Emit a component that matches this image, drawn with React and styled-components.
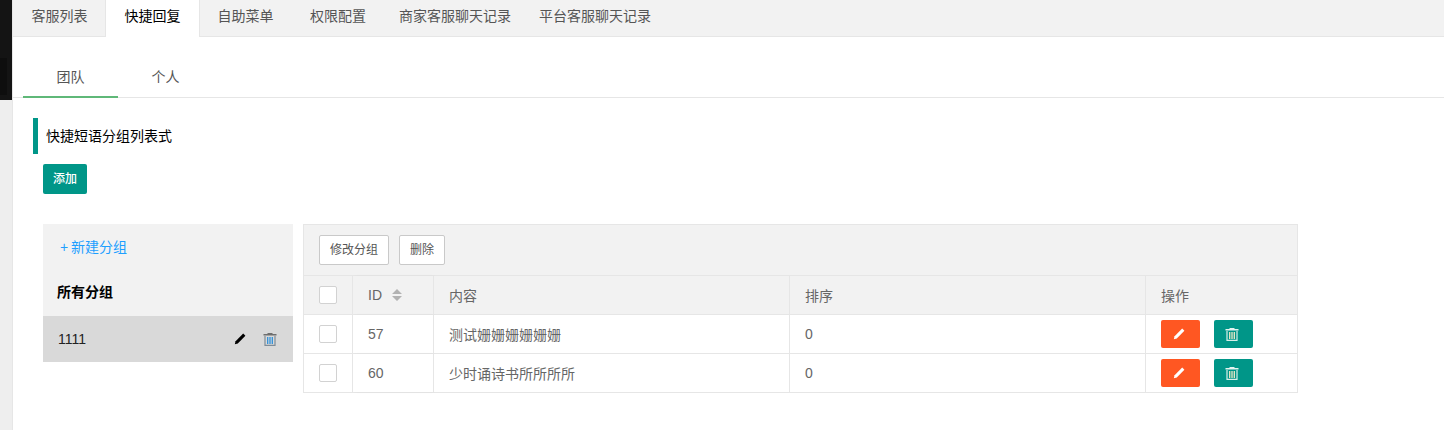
import React from 'react'
import styled, { createGlobalStyle } from 'styled-components'

const GlobalStyle = createGlobalStyle`
html, body {
  margin: 0;
  padding: 0;
  height: 430px;
  overflow: hidden;
  background: #fff;
  font-family: "Liberation Sans", "Noto Sans CJK SC", sans-serif;
  font-size: 14px;
  color: #666;
}
* { box-sizing: border-box; }
`

function Pencil({ color }) {
  return (
    <svg width="12" height="12" viewBox="0 0 12 12">
      <path d="M9.2 0.6 L11.4 2.8 L3.8 10.4 L0.8 11.2 L1.6 8.2 Z" fill={color} />
    </svg>
  )
}

function Trash({ lid, outline, lines }) {
  return (
    <svg width="14" height="13" viewBox="0 0 14 13">
      <path d="M4.5 0 H9.5 V1 H13.5 V2.6 H0.5 V1 H4.5 Z" fill={lid} />
      <path d="M2 3 V12.4 H12 V3" fill="none" stroke={outline} strokeWidth="1.2" />
      <path d="M4.7 4 V11 M7 4 V11 M9.3 4 V11" stroke={lines} strokeWidth="1.3" fill="none" />
    </svg>
  )
}

const topTabs = [
  { label: '客服列表', pad: 18.5 },
  { label: '快捷回复', pad: 18.5, active: true },
  { label: '自助菜单', pad: 18.5 },
  { label: '权限配置', pad: 18 },
  { label: '商家客服聊天记录', pad: 15 },
  { label: '平台客服聊天记录', pad: 13 },
]

const rows = [
  { id: 57, text: '测试姗姗姗姗姗姗', sort: 0 },
  { id: 60, text: '少时诵诗书所所所所', sort: 0 },
]

export default function App() {
  return (
    <Page>
      <GlobalStyle />
      <SideStrip>
        <DarkBlock>
          <DarkInset />
        </DarkBlock>
      </SideStrip>
      <Main>
        <TopTabs>
          {topTabs.map((t) => (
            <TopTab key={t.label} $pad={t.pad} $active={t.active}>{t.label}</TopTab>
          ))}
        </TopTabs>
        <SubTabs>
          <SubTab $active>团队</SubTab>
          <SubTab>个人</SubTab>
        </SubTabs>
        <Quote>快捷短语分组列表式</Quote>
        <AddButton>添加</AddButton>
        <Content>
          <GroupPanel>
            <NewGroup>+ 新建分组</NewGroup>
            <GroupTitle>所有分组</GroupTitle>
            <GroupRow>
              <span>1111</span>
              <GroupIcons>
                <Pencil color="#000" />
                <Trash lid="#6e6e6e" outline="#7f8c97" lines="#2f8fd8" />
              </GroupIcons>
            </GroupRow>
          </GroupPanel>
          <TableBox>
            <Toolbar>
              <PlainButton>修改分组</PlainButton>
              <PlainButton>删除</PlainButton>
            </Toolbar>
            <Table>
              <colgroup>
                <col style={{ width: 48 }} />
                <col style={{ width: 81 }} />
                <col style={{ width: 356 }} />
                <col style={{ width: 356 }} />
                <col />
              </colgroup>
              <thead>
                <tr>
                  <Th><Check /></Th>
                  <Th $shadow>
                    <IdHead>
                      ID
                      <SortIcon viewBox="0 0 10 12" width="10" height="12">
                        <path d="M5 0 L10 5 H0 Z M0 7 H10 L5 12 Z" fill="#b2b2b2" />
                      </SortIcon>
                    </IdHead>
                  </Th>
                  <Th>内容</Th>
                  <Th>排序</Th>
                  <Th>操作</Th>
                </tr>
              </thead>
              <tbody>
                {rows.map((r) => (
                  <tr key={r.id}>
                    <Td><Check /></Td>
                    <Td $shadow>{r.id}</Td>
                    <Td>{r.text}</Td>
                    <Td>{r.sort}</Td>
                    <Td>
                      <Actions>
                        <ActionButton $bg="#ff5722"><Pencil color="#fff" /></ActionButton>
                        <ActionButton $bg="#009688">
                          <Trash lid="#e4f3ef" outline="#d8efe9" lines="#efe9c8" />
                        </ActionButton>
                      </Actions>
                    </Td>
                  </tr>
                ))}
              </tbody>
            </Table>
          </TableBox>
        </Content>
      </Main>
    </Page>
  )
}

const Page = styled.div`
  display: flex;
  width: 1444px;
  height: 430px;
  overflow: hidden;
`

const SideStrip = styled.div`
  width: 13px;
  flex: none;
  background: #eeeeee;
  border-right: 1px solid #e6e6e6;
`

const DarkBlock = styled.div`
  width: 12px;
  height: 100px;
  padding-top: 58px;
  background: #141414;
`

const DarkInset = styled.div`
  width: 7px;
  height: 37px;
  background: #0e0e0e;
`

const Main = styled.div`
  flex: 1;
  min-width: 0;
`

const TopTabs = styled.div`
  display: flex;
  height: 37px;
  background: #f2f2f2;
  border-bottom: 1px solid #e6e6e6;
`

const TopTab = styled.div`
  height: ${(p) => (p.$active ? '37px' : '36px')};
  line-height: 33px;
  padding: 0 ${(p) => p.$pad}px;
  color: ${(p) => (p.$active ? '#000' : '#555')};
  background: ${(p) => (p.$active ? '#fff' : 'transparent')};
  box-shadow: ${(p) => (p.$active ? '-1px 0 0 #e6e6e6, 1px 0 0 #e6e6e6' : 'none')};
  font-size: 14px;
  white-space: nowrap;
`

const SubTabs = styled.div`
  display: flex;
  height: 61px;
  padding: 20px 0 0 10px;
  border-bottom: 1px solid #e6e6e6;
`

const SubTab = styled.div`
  width: 95px;
  height: 41px;
  line-height: 40px;
  text-align: center;
  font-size: 14px;
  color: #555;
  border-bottom: ${(p) => (p.$active ? '2px solid #5fb878' : 'none')};
`

const Quote = styled.div`
  height: 36px;
  line-height: 36px;
  margin: 20px 0 0 20px;
  padding-left: 8px;
  border-left: 5px solid #009688;
  color: #000;
  font-size: 14px;
`

const AddButton = styled.div`
  width: 44px;
  height: 30px;
  line-height: 30px;
  margin: 10px 0 0 30px;
  text-align: center;
  background: #009688;
  border-radius: 2px;
  color: #fff;
  font-size: 12px;
  font-weight: 500;
`

const Content = styled.div`
  display: flex;
  align-items: flex-start;
  gap: 10px;
  margin: 30px 0 0 30px;
`

const GroupPanel = styled.div`
  width: 250px;
  background: #f2f2f2;
`

const NewGroup = styled.div`
  height: 46px;
  line-height: 46px;
  padding-left: 17px;
  color: #1e9fff;
  font-size: 14px;
  word-spacing: -1px;
`

const GroupTitle = styled.div`
  height: 46px;
  line-height: 44px;
  padding-left: 14px;
  color: #000;
  font-size: 14px;
  font-weight: 700;
`

const GroupRow = styled.div`
  display: flex;
  align-items: center;
  justify-content: space-between;
  height: 46px;
  padding: 0 16px 0 15px;
  background: #d9d9d9;
  color: #222;
  font-size: 14px;
`

const GroupIcons = styled.div`
  display: flex;
  align-items: center;
  gap: 17px;
`

const TableBox = styled.div`
  width: 995px;
  border: 1px solid #e6e6e6;
`

const Toolbar = styled.div`
  display: flex;
  gap: 10px;
  height: 51px;
  padding: 10px 15px;
  background: #f2f2f2;
  border-bottom: 1px solid #e6e6e6;
`

const PlainButton = styled.div`
  height: 30px;
  line-height: 28px;
  padding: 0 10px;
  background: #fff;
  border: 1px solid #c9c9c9;
  border-radius: 2px;
  color: #555;
  font-size: 12px;
`

const Table = styled.table`
  width: 100%;
  table-layout: fixed;
  border-collapse: separate;
  border-spacing: 0;
`

const Th = styled.th`
  position: relative;
  height: 39px;
  padding: 0 15px;
  background: #f2f2f2;
  border-left: 1px solid #e6e6e6;
  border-bottom: 1px solid #e6e6e6;
  text-align: left;
  font-weight: 400;
  font-size: 14px;
  color: #666;
  box-shadow: ${(p) => (p.$shadow ? '2px 0 3px -1px rgba(0,0,0,0.08)' : 'none')};
  &:first-child { border-left: none; }
`

const Td = styled.td`
  position: relative;
  height: 39px;
  padding: 0 15px;
  background: #fff;
  border-left: 1px solid #e6e6e6;
  border-bottom: 1px solid #e6e6e6;
  font-size: 14px;
  color: #666;
  box-shadow: ${(p) => (p.$shadow ? '2px 0 3px -1px rgba(0,0,0,0.08)' : 'none')};
  &:first-child { border-left: none; }
  tr:last-child > & { border-bottom: none; height: 38px; }
`

const Check = styled.div`
  width: 18px;
  height: 18px;
  background: #fff;
  border: 1px solid #d2d2d2;
  border-radius: 2px;
`

const IdHead = styled.div`
  display: flex;
  align-items: center;
  gap: 10px;
`

const SortIcon = styled.svg`
  display: block;
`

const Actions = styled.div`
  display: flex;
  gap: 14px;
`

const ActionButton = styled.div`
  display: flex;
  align-items: center;
  justify-content: center;
  width: 39px;
  height: 28px;
  padding-right: 3px;
  background: ${(p) => p.$bg};
  border-radius: 2px;
`
